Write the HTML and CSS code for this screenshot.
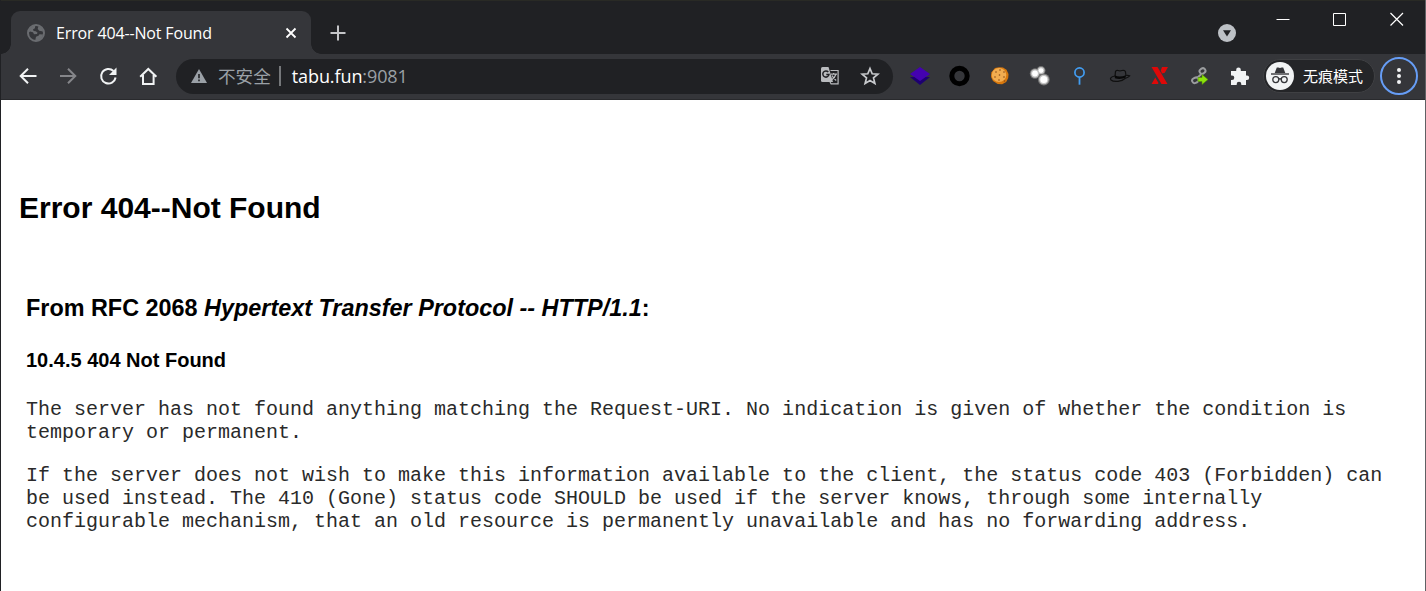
FILE: index.html
```html
<!DOCTYPE html>
<html lang="en">
<head>
<meta charset="utf-8">
<title>Error 404--Not Found</title>
<link rel="stylesheet" href="styles.css">
</head>
<body>
<div class="window">
  <header class="tabstrip">
    <div class="tab">
      <svg class="favicon" width="18" height="18" viewBox="0 0 18 18"><circle cx="9" cy="9" r="8" fill="#35363a" stroke="#6a6c70" stroke-width="2"/><path d="M9 1.500C5 1.500 1.700 4.700 1.700 8.500l1.300-1 3 .8 1 2 3-.2 .5-1.600-1.800-1.200-2-.2-.8-1.700 2-1.200.3-2zM11.500 2l-.8 3 1.500 1.800 4 .7C15.800 5 14 2.800 11.500 2zM16 10.500l-3.500-.3-1 1.500-2.500 1-.8 3.800C12 17 15.500 14.500 16 10.500z" fill="#6a6c70"/></svg>
      <span class="tab-title">Error 404--Not Found</span>
      <svg class="tab-close" width="12" height="12" viewBox="0 0 12 12"><path d="M1.500 1.500l9 9M10.500 1.500l-9 9" stroke="#fff" stroke-width="1.800"/></svg>
    </div>
    <svg class="new-tab" width="16" height="16" viewBox="0 0 16 16"><path d="M8 .5v15M.5 8h15" stroke="#c4c5c8" stroke-width="2"/></svg>
    <div class="captions">
      <svg class="search-tabs" width="18" height="18" viewBox="0 0 18 18"><circle cx="9" cy="9" r="9" fill="#bdc1c6"/><path d="M5 6.300h8L9 12.500z" fill="#202124"/></svg>
      <svg class="caption" width="14" height="14" viewBox="0 0 14 14"><path d="M.5 7.500h13" stroke="#fff"/></svg>
      <svg class="caption" width="14" height="14" viewBox="0 0 14 14"><path d="M.5 1.500h12v12H.5z" fill="none" stroke="#fff"/></svg>
      <svg class="caption" width="14" height="14" viewBox="0 0 14 14"><path d="M.5 1l12.500 12.500M13 1L.5 13.500" stroke="#fff" stroke-width="1.200"/></svg>
    </div>
  </header>

  <nav class="toolbar">
    <div class="cell"><svg width="20" height="20" viewBox="0 0 20 20"><path d="M18.500 10H3M10 2.700L2.700 10l7.300 7.300" fill="none" stroke="#f1f3f4" stroke-width="2"/></svg></div>
    <div class="cell"><svg width="20" height="20" viewBox="0 0 20 20"><path d="M2 10h15.500M10 2.700l7.300 7.300-7.300 7.300" fill="none" stroke="#85868a" stroke-width="2"/></svg></div>
    <div class="cell"><svg width="20" height="20" viewBox="0 0 20 20"><path d="M15.500 5A7.300 7.300 0 1 0 17.600 11.500" fill="none" stroke="#f1f3f4" stroke-width="2"/><path d="M18.500 1.500V9h-7.500z" fill="#f1f3f4"/></svg></div>
    <div class="cell"><svg width="20" height="20" viewBox="0 0 20 20"><path d="M2.200 10.800L10.300 3l8.100 7.800M5 9v9h10.600V9" fill="none" stroke="#f1f3f4" stroke-width="2"/></svg></div>

    <div class="omnibox">
      <svg class="warn" width="16" height="14" viewBox="0 0 16 14"><path d="M8 0l8 14H0z" fill="#9aa0a6"/><path d="M8 5v4.300M8 10.500v1.800" stroke="#202124" stroke-width="1.600"/></svg>
      <span class="security">不安全</span>
      <span class="divider"></span>
      <span class="url"><span class="host">tabu.fun</span><span class="port">:9081</span></span>
      <svg class="translate" width="20" height="20" viewBox="0 0 20 20"><path d="M1 2.500Q1 1 2.500 1h6L13 16H2.500Q1 16 1 14.500z" fill="#b9bbbe"/><path d="M8.300 6A3.100 3.100 0 1 0 9 8.500H6.300" fill="none" stroke="#202124" stroke-width="1.500"/><path d="M10.500 4.500h7.600v13.300h-7L10 16M10.800 8.200h6.200M13.600 7v1.200M15.800 8.500c-.7 2.300-2.200 4-4 5.200M12 9.500c1 2 2.500 3.500 4.200 5" fill="none" stroke="#b9bbbe" stroke-width="1.200"/></svg>
      <svg class="star" width="20" height="20" viewBox="0 0 20 20"><path d="M10 2.500l2.200 5.300 5.700.4-4.400 3.700 1.400 5.600L10 14.500l-4.900 3 1.400-5.600-4.400-3.700 5.700-.4z" fill="none" stroke="#c8cacd" stroke-width="1.700"/></svg>
    </div>

    <div class="extensions">
      <div class="cell"><svg width="22" height="20" viewBox="0 0 22 20"><path d="M1 11h20l-10 8z" fill="#1d0070"/><path d="M11 1l10 7-10 7L1 8z" fill="#4402b0"/></svg></div>
      <div class="cell"><svg width="22" height="22" viewBox="0 0 22 22"><circle cx="10.500" cy="11" r="7.700" fill="none" stroke="#000" stroke-width="5"/></svg></div>
      <div class="cell"><svg width="20" height="20" viewBox="0 0 20 20"><path d="M5 2l4-.8 4 .3 3.500 2.300L18.500 8l-.3 4-2 4-4 2.300-4.500-.3L3 15 1 11l.3-4.500z" fill="#d8780d"/><ellipse cx="9" cy="9" rx="7.300" ry="7" fill="#f2ad50"/><g fill="#8a4c18"><circle cx="6" cy="6" r=".8"/><circle cx="10" cy="4" r=".8"/><circle cx="14" cy="6" r=".8"/><circle cx="9.500" cy="9" r=".8"/><circle cx="5" cy="11" r=".8"/><circle cx="14" cy="11" r=".8"/><circle cx="9" cy="14" r=".8"/><circle cx="14.500" cy="15" r=".8"/></g></svg></div>
      <div class="cell"><svg width="22" height="22" viewBox="0 0 22 22"><g fill="#777"><circle cx="6" cy="8.500" r="5.200"/><circle cx="12" cy="5.600" r="4.500"/><circle cx="14.800" cy="14.500" r="5.900"/></g><g fill="#c4c4c4"><circle cx="6" cy="8.500" r="4.200"/><circle cx="12" cy="5.600" r="3.500"/><circle cx="14.800" cy="14.500" r="4.800"/></g><g fill="#fff"><circle cx="6" cy="8.500" r="2.900"/><circle cx="12" cy="5.600" r="2.400"/><circle cx="14.800" cy="14.500" r="3.500"/></g></svg></div>
      <div class="cell"><svg width="20" height="20" viewBox="0 0 20 20"><circle cx="9.500" cy="6.500" r="4.600" fill="none" stroke="#429df2" stroke-width="1.700"/><path d="M9.500 11v7.700" stroke="#429df2" stroke-width="1.800"/></svg></div>
      <div class="cell"><svg width="22" height="20" viewBox="0 0 22 20"><path d="M6 10.500L6.500 5.500Q7 4 9 4.500q2 .7 4 0 3-.7 3.500 1.500l.5 4" fill="#35363a" stroke="#101010" stroke-width="1.200"/><path d="M6 9.500q5 2 10.800-.3v2.300q-5.500 2.500-11 .8z" fill="#080808"/><path d="M6 10C2 10.500.7 12.500 2 14c3 2.500 11 1.500 14-1.500 2-.8 4-1.200 4.700-2.700-1-.5-2.500-.5-3.500-.3" fill="none" stroke="#101010" stroke-width="1.200"/></svg></div>
      <div class="cell"><svg width="20" height="20" viewBox="0 0 20 20"><path d="M1.500 1h6l10 17h-6zM1.500 18l3.800-6.500L8.500 17l-.5 1zM12 1h6l-3.200 5.800L12 7.500 10.800 4.500z" fill="#df0808"/></svg></div>
      <div class="cell"><svg width="20" height="20" viewBox="0 0 20 20"><g fill="none" stroke="#9b9d9f" stroke-width="2"><rect x="9.500" y="2.500" width="6" height="5" rx="2.500" transform="rotate(-35 12.500 5)"/><rect x="2" y="11.500" width="6.500" height="5" rx="2.500" transform="rotate(-25 6 14)"/><path d="M7 12l4.500-4"/></g><path d="M8 11.500h4V8.500l6 5-6 5v-3H8z" fill="#8ce20b" stroke="#4f8e08" stroke-width=".6"/></svg></div>
      <div class="cell"><svg width="20" height="20" viewBox="0 0 20 20"><path d="M1 5h5.200V3.800a2.300 2.300 0 0 1 4.600 0V5H16v4.600h1a2.200 2.200 0 0 1 0 4.400h-1v5h-4.700v-1a2.300 2.300 0 0 0-4.600 0v1H1v-5h1a2.300 2.300 0 0 0 0-4.600H1z" fill="#f1f3f4"/></svg></div>
    </div>

    <div class="incognito">
      <svg width="28" height="28" viewBox="0 0 28 28"><circle cx="14" cy="14" r="14" fill="#f1f3f4"/><path d="M8.700 11L10.800 5.500h1.500l1.700.6 1.700-.6h1.500l2.100 5.500z" fill="#35363a"/><path d="M5 12h18" stroke="#35363a" stroke-width="1.400"/><g fill="none" stroke="#35363a" stroke-width="1.300"><circle cx="9.800" cy="17.600" r="3"/><circle cx="18.200" cy="17.600" r="3"/><path d="M12.800 17.200q1.200-.9 2.400 0"/></g></svg>
      <span>无痕模式</span>
    </div>
    <div class="menu"><svg width="6" height="18" viewBox="0 0 6 18"><g fill="#f1f3f4"><circle cx="3" cy="3" r="2"/><circle cx="3" cy="9" r="2"/><circle cx="3" cy="15" r="2"/></g></svg></div>
  </nav>

  <main class="page">
    <h1>Error 404--Not Found</h1>
    <section class="rfc">
      <h3>From RFC 2068 <i>Hypertext Transfer Protocol -- HTTP/1.1</i>:</h3>
      <h4>10.4.5 404 Not Found</h4>
      <p>The server has not found anything matching the Request-URI. No indication is given of whether the condition is temporary or permanent.</p>
      <p>If the server does not wish to make this information available to the client, the status code 403 (Forbidden) can be used instead. The 410 (Gone) status code SHOULD be used if the server knows, through some internally configurable mechanism, that an old resource is permanently unavailable and has no forwarding address.</p>
    </section>
  </main>
</div>
</body>
</html>
```

FILE: styles.css
```css
* { box-sizing: border-box; }
body { margin: 0; overflow: hidden; background: #fff; }
svg { display: block; flex: none; }

.window {
  display: flex;
  flex-direction: column;
  height: 591px;
  border-left: 1px solid #202124;
  border-right: 1px solid #606164;
}

.tabstrip {
  display: flex;
  height: 54px;
  padding: 10px 0 0 10px;
  background: #202124;
  border-top: 1px solid #292a25;
}
.tab {
  position: relative;
  display: flex;
  align-items: center;
  width: 300px;
  height: 43px;
  padding: 0 14px 0 16px;
  border-radius: 9px 9px 0 0;
  background: #35363a;
}
/* flared bottom corners of the active tab */
.tab::before, .tab::after {
  content: "";
  position: absolute;
  bottom: 0;
  width: 10px;
  height: 10px;
}
.tab::before { left: -10px; background: radial-gradient(circle at 0 0, #202124 9.500px, #35363a 10px); }
.tab::after { right: -10px; background: radial-gradient(circle at 100% 0, #202124 9.500px, #35363a 10px); }
.tab-title {
  margin-left: 11px;
  color: #fff;
  font: 16px/22px "Open Sans", sans-serif;
  letter-spacing: -0.15px;
  white-space: nowrap;
}
.tab-close { margin-left: auto; }
.new-tab { margin: 14px 0 0 19px; }
.captions { display: flex; margin-left: auto; }
.search-tabs { margin: 13px 40px 0 0; }
.caption { margin: 1px 43px 0 0; }
.caption:last-child { margin-right: 21px; }

.toolbar {
  display: flex;
  align-items: center;
  height: 46px;
  padding: 0 7px 1px;
  background: #35363a;
  border-bottom: 1px solid #292a2d;
}
.cell {
  display: flex;
  align-items: center;
  justify-content: center;
  flex: none;
  width: 40px;
  height: 40px;
}
.omnibox {
  display: flex;
  align-items: center;
  width: 717px;
  height: 35px;
  margin-left: 8px;
  padding: 0 13px 0 15px;
  border-radius: 18px;
  background: #202124;
  font: 18px/26px "Open Sans", "Noto Sans CJK SC", sans-serif;
  white-space: nowrap;
}
.security {
  margin-left: 11px;
  color: #9aa0a6;
  font: 17.6px/26px "Noto Sans CJK SC", sans-serif;
}
.divider { width: 2px; height: 20px; margin: 0 11px 0 8px; background: #75777a; }
.url { letter-spacing: -0.1px; }
.host { color: #fff; }
.port { color: #9aa0a6; }
.translate { margin-left: auto; }
.star { margin-left: 20px; }
.extensions { display: flex; margin-left: 7px; }
.incognito {
  display: flex;
  align-items: center;
  width: 112px;
  height: 34px;
  margin-left: 3px;
  padding-left: 2px;
  border: 1px solid #3f4043;
  border-radius: 17px;
  background: #242528;
  color: #fff;
  font: 15px/22px "Noto Sans CJK SC", sans-serif;
  white-space: nowrap;
}
.incognito span { margin-left: 9px; }
.menu {
  display: flex;
  align-items: center;
  justify-content: center;
  width: 38px;
  height: 38px;
  margin-left: 5px;
  border: 2px solid #669df6;
  border-radius: 50%;
}

.page {
  flex: 1;
  padding: 91px 18px 0;
  background: #fff;
  color: #000;
  font-family: "Liberation Sans", Arial, sans-serif;
}
.page h1 { margin: 0; font-size: 30px; line-height: 34px; }
.rfc { padding: 70px 7px 0; }
.rfc h3 { margin: 0 0 27px; font-size: 23.4px; line-height: 27px; }
.rfc h4 { margin: 0 0 26px; font-size: 20px; line-height: 23px; }
.rfc p {
  margin: 0 0 20px;
  color: #2a2a2a;
  font: 20px/23px "Liberation Mono", "Courier New", monospace;
}
```
